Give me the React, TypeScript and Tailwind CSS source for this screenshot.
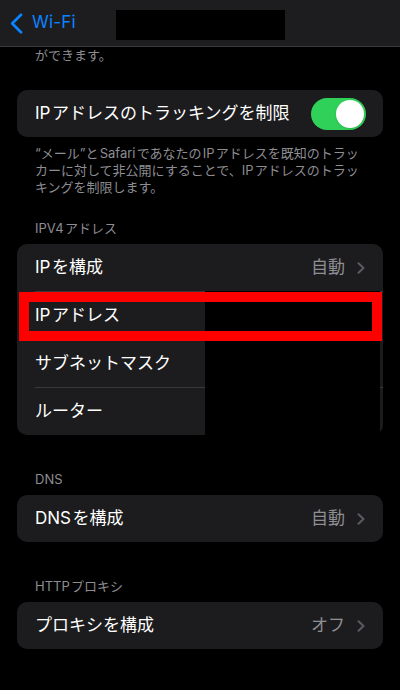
import React from "react";

const font = { fontFamily: '"Inter", "Noto Sans CJK JP", sans-serif' };

// iOS puts a small gap between latin and kana
const gap = "\u200a";

const Chevron = () => (
    <svg width="8" height="12" viewBox="0 0 8 12" fill="none">
        <polyline points="1.5,1.2 6.5,6 1.5,10.8" stroke="#5b5b60" strokeWidth="2" strokeLinecap="round" strokeLinejoin="round" />
    </svg>
);

const SectionHeader = ({ children, className = "" }: { children: React.ReactNode; className?: string }) => (
    <p className={`px-[35px] text-[13px] leading-[17px] text-[#8d8d93] ${className}`}>{children}</p>
);

const LinkRow = ({ label, value }: { label: string; value?: string }) => (
    <div className="h-[47px] flex items-center justify-between pl-[18px] pr-[18px]">
        <span className="text-[17px] text-white">{label}</span>
        {value && (
            <span className="flex items-center gap-[12px]">
                <span className="text-[17px] text-[#8e8e93]">{value}</span>
                <Chevron />
            </span>
        )}
    </div>
);

const Divider = () => <div className="h-px bg-[#38383a] ml-[18px]" />;

export default function App() {
    return (
        <div className="w-[400px] h-[690px] bg-black overflow-hidden" style={font}>
            {/* nav bar */}
            <div className="relative h-[47px] bg-[#1d1d1f] border-b border-[#39393b] flex items-center pl-[10px]">
                <svg width="13" height="21" viewBox="0 0 13 21" fill="none">
                    <polyline points="11,1.8 2.2,10.5 11,19.2" stroke="#0a84ff" strokeWidth="2.7" strokeLinecap="round" strokeLinejoin="round" />
                </svg>
                <span className="ml-[9px] text-[17px] text-[#0a84ff] tracking-[0.2px]">Wi-Fi</span>
                <div className="absolute left-[116px] top-[10px] w-[169px] h-[30px] bg-black" />
            </div>

            <p className="px-[35px] text-[13px] leading-[17px] text-[#8d8d93]">ができます。</p>

            <div className="mx-[17px] mt-[26px] h-[47px] rounded-[10px] bg-[#1c1c1e] flex items-center justify-between pl-[18px] pr-[17px]">
                <span className="text-[17px] text-white">IP{gap}アドレスのトラッキングを制限</span>
                <div className="w-[55px] h-[32px] rounded-full bg-[#30d158] flex items-center justify-end pr-[2px]">
                    <div className="w-[28px] h-[28px] rounded-full bg-white shadow" />
                </div>
            </div>

            <p className="px-[35px] pt-[8px] text-[13px] leading-[17px] text-[#8d8d93] whitespace-nowrap">
                “メール”と{gap}Safari{gap}であなたの{gap}IP{gap}アドレスを既知のトラッ
                <br />
                カーに対して非公開にすることで、IP{gap}アドレスのトラッ
                <br />
                キングを制限します。
            </p>

            <SectionHeader className="mt-[24px]">IPV4{gap}アドレス</SectionHeader>
            <div className="relative mx-[17px] mt-[7px] rounded-[10px] bg-[#1c1c1e]">
                <LinkRow label={`IP${gap}を構成`} value="自動" />
                <Divider />
                <LinkRow label={`IP${gap}アドレス`} />
                <Divider />
                <LinkRow label="サブネットマスク" />
                <Divider />
                <LinkRow label="ルーター" />
                {/* redaction */}
                <div className="absolute left-[188px] top-[47px] bottom-0 w-[175px] bg-black" />
                <div className="absolute left-[2px] top-[48px] w-[363px] h-[49px] border-[10px] border-[#ff0000]" />
            </div>

            <SectionHeader className="mt-[36px]">DNS</SectionHeader>
            <div className="mx-[17px] mt-[7px] rounded-[10px] bg-[#1c1c1e]">
                <LinkRow label={`DNS${gap}を構成`} value="自動" />
            </div>

            <SectionHeader className="mt-[36px]">HTTP{gap}プロキシ</SectionHeader>
            <div className="mx-[17px] mt-[7px] rounded-[10px] bg-[#1c1c1e]">
                <LinkRow label="プロキシを構成" value="オフ" />
            </div>
        </div>
    );
}
